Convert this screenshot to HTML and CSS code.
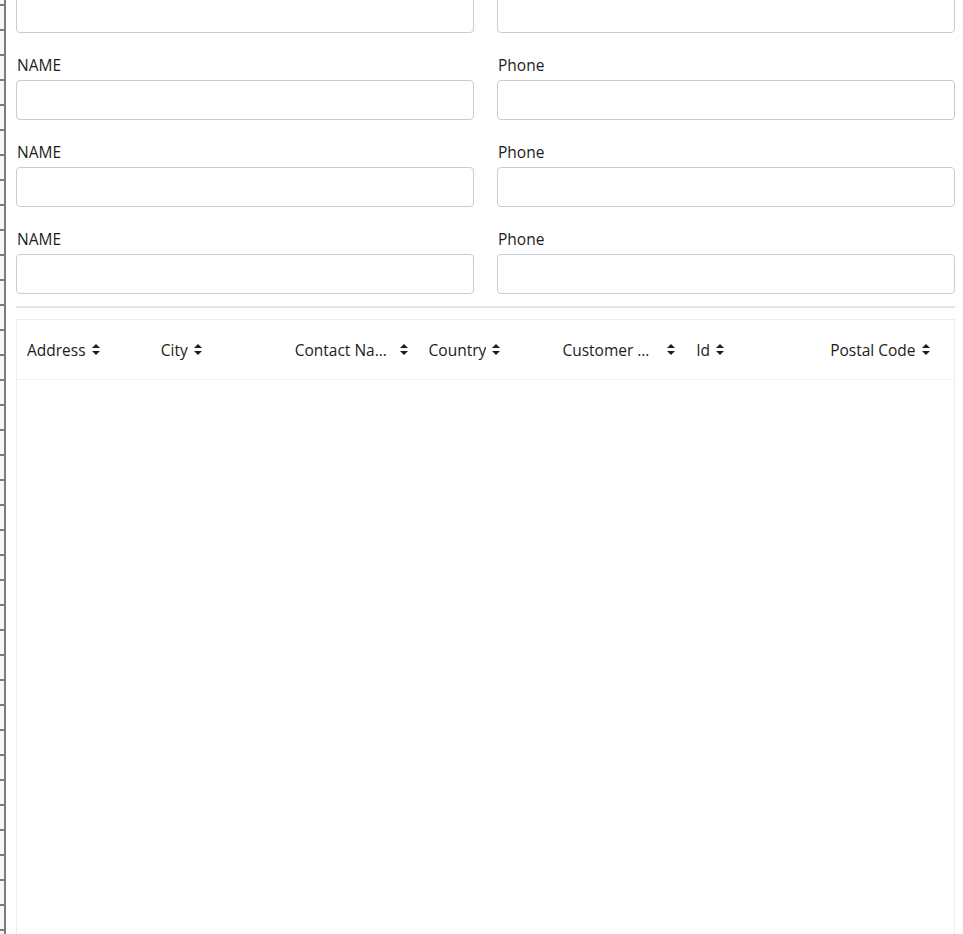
FILE: index.html
```html
<!DOCTYPE html>
<html lang="en">
<head>
    <meta charset="UTF-8">
    <meta name="viewport" content="width=device-width, initial-scale=1.0">
    <title>Customers</title>
    <link rel="stylesheet" href="styles.css">
</head>
<body>
    <div class="page">
        <div class="rail">
            <div class="rail-seg"></div><div class="rail-seg"></div><div class="rail-seg"></div>
            <div class="rail-seg"></div><div class="rail-seg"></div><div class="rail-seg"></div>
            <div class="rail-seg"></div><div class="rail-seg"></div><div class="rail-seg"></div>
            <div class="rail-seg"></div><div class="rail-seg"></div><div class="rail-seg"></div>
            <div class="rail-seg"></div><div class="rail-seg"></div><div class="rail-seg"></div>
            <div class="rail-seg"></div><div class="rail-seg"></div><div class="rail-seg"></div>
            <div class="rail-seg"></div><div class="rail-seg"></div><div class="rail-seg"></div>
            <div class="rail-seg"></div><div class="rail-seg"></div><div class="rail-seg"></div>
            <div class="rail-seg"></div><div class="rail-seg"></div><div class="rail-seg"></div>
            <div class="rail-seg"></div><div class="rail-seg"></div><div class="rail-seg"></div>
            <div class="rail-seg"></div><div class="rail-seg"></div><div class="rail-seg"></div>
            <div class="rail-seg"></div><div class="rail-seg"></div><div class="rail-seg"></div>
            <div class="rail-seg"></div><div class="rail-seg"></div>
        </div>

        <div class="content">
            <div class="form">
                <div class="field"><label>NAME</label><input type="text"></div>
                <div class="field"><label>Phone</label><input type="text"></div>
                <div class="field"><label>NAME</label><input type="text"></div>
                <div class="field"><label>Phone</label><input type="text"></div>
                <div class="field"><label>NAME</label><input type="text"></div>
                <div class="field"><label>Phone</label><input type="text"></div>
                <div class="field"><label>NAME</label><input type="text"></div>
                <div class="field"><label>Phone</label><input type="text"></div>
            </div>

            <hr class="divider">

            <div class="grid">
                <div class="grid-head">
                    <div class="col"><span class="col-title">Address</span><span class="sort"></span></div>
                    <div class="col"><span class="col-title">City</span><span class="sort"></span></div>
                    <div class="col"><span class="col-title trunc">Contact Name</span><span class="sort"></span></div>
                    <div class="col"><span class="col-title">Country</span><span class="sort"></span></div>
                    <div class="col"><span class="col-title trunc">Customer Name</span><span class="sort"></span></div>
                    <div class="col"><span class="col-title">Id</span><span class="sort"></span></div>
                    <div class="col"><span class="col-title">Postal Code</span><span class="sort"></span></div>
                </div>
                <div class="grid-body"></div>
            </div>
        </div>
    </div>
</body>
</html>
```

FILE: styles.css
```css
body {
    margin: 0;
    font-family: "Open Sans", "Noto Sans", sans-serif;
    font-size: 15.5px;
    color: #1b1d21;
    background: #fff;
    overflow: hidden;
}
.page {
    display: flex;
    min-height: 100vh;
}

/* left rail of stacked boxes */
.rail {
    width: 4px;
    flex: none;
    background: #f6f6f6;
    border-right: 2px solid #7c7c7c;
    margin-top: -19px;
}
.rail-seg {
    height: 23px;
    border-bottom: 2px solid #7c7c7c;
}

.content {
    flex: 1;
    padding: 0 8px 0 10px;
}

.form {
    display: grid;
    grid-template-columns: 1fr 1fr;
    column-gap: 23px;
    row-gap: 20px;
    margin-top: -34px;
}
.field label {
    display: block;
    margin: 0 0 4px 1px;
    padding-top: 1px;
    line-height: 22px;
}
.field input {
    display: block;
    box-sizing: border-box;
    width: 100%;
    height: 40px;
    border: 1px solid #c9ccd6;
    border-radius: 4px;
    background: #fff;
}

.divider {
    border: none;
    height: 2px;
    background: #e3e5ea;
    margin: 12px 0 11px;
}

.grid {
    border: 1px solid #eceef0;
    height: 800px;
}
.grid-head {
    display: grid;
    grid-template-columns: repeat(7, 1fr);
    height: 59px;
    border-bottom: 1px solid #f0f1f3;
}
.col {
    display: flex;
    align-items: center;
    padding: 0 10px;
    min-width: 0;
}
.col-title {
    white-space: nowrap;
    overflow: hidden;
    text-overflow: ellipsis;
}
.col-title.trunc {
    flex: 1;
    min-width: 0;
}
.col-title.trunc + .sort {
    margin-left: 8px;
    margin-right: 1px;
}
.sort {
    flex: none;
    width: 0;
    height: 11px;
    margin-left: 6px;
    border-left: 4px solid transparent;
    border-right: 4px solid transparent;
    position: relative;
}
.sort::before,
.sort::after {
    content: "";
    position: absolute;
    left: -4px;
    border-left: 4px solid transparent;
    border-right: 4px solid transparent;
}
.sort::before {
    top: 0;
    border-bottom: 4px solid #1b1d21;
}
.sort::after {
    bottom: 0;
    border-top: 4px solid #1b1d21;
}
```
